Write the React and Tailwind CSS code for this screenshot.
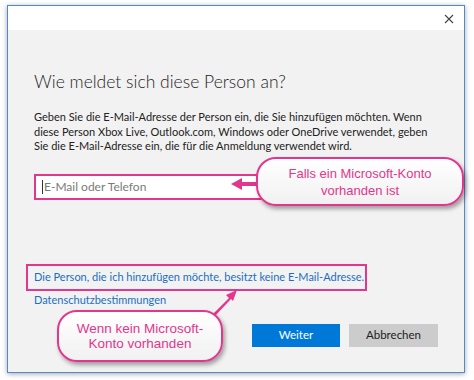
import React from 'react';

function Callout({ className, children }) {
  return (
    <div
      className={`absolute flex items-center justify-center text-center rounded-[20px] border-2 border-[#e2378c] bg-gradient-to-b from-white to-[#f1f1f1] shadow-[2px_3px_4px_rgba(0,0,0,0.35)] text-[#e2378c] ${className}`}
      style={{ fontFamily: '"Liberation Sans", Arial, sans-serif' }}
    >
      {children}
    </div>
  );
}

export default function App() {
  return (
    <div className="w-[474px] h-[380px] bg-white pt-[5px] pl-[7px] overflow-hidden relative" style={{ fontFamily: 'Lato, "Open Sans", sans-serif' }}>
      <div className="w-[458px] h-[368px] border border-[#4f8bcb] shadow-[0_1px_5px_rgba(0,0,0,0.35)] flex flex-col">
        {/* title bar */}
        <div className="h-[24px] bg-white flex items-center justify-end pr-[10px]">
          <svg width="10" height="10" viewBox="0 0 10 10" className="mt-[1px]">
            <path d="M1 1 L9 9 M9 1 L1 9" stroke="#444" strokeWidth="1.1" />
          </svg>
        </div>

        {/* body */}
        <div className="flex-1 bg-[#f2f2f2] pl-[26px] pr-[20px] flex flex-col">
          <h1 className="mt-[40px] text-[17.5px] leading-[24px] font-light text-[#1f1f1f]">
            Wie meldet sich diese Person an?
          </h1>

          <p className="mt-[16px] text-[11px] leading-[14.5px] text-[#222] whitespace-nowrap">
            Geben Sie die E-Mail-Adresse der Person ein, die Sie hinzufügen möchten. Wenn
            <br />
            diese Person Xbox Live, Outlook.com, Windows oder OneDrive verwendet, geben
            <br />
            Sie die E-Mail-Adresse ein, die für die Anmeldung verwendet wird.
          </p>

          <div className="mt-[20px] w-[386px] h-[26px] border-2 border-[#e2378c] bg-white flex items-center pl-[6px]">
            <span className="w-px h-[14px] bg-[#333]" />
            <span className="text-[12px] text-[#7a7a7a] ml-[1px]">E-Mail oder Telefon</span>
          </div>

          <div className="mt-[64px] w-[341px] h-[27px] -ml-[8px] border-2 border-[#e2378c] flex items-center pl-[6px]">
            <span className="text-[11px] text-[#1a6fbf] whitespace-nowrap">
              Die Person, die ich hinzufügen möchte, besitzt keine E-Mail-Adresse.
            </span>
          </div>
          <div className="mt-[1px] text-[11px] text-[#1a6fbf] leading-[16px]">Datenschutzbestimmungen</div>

          <div className="mt-[16px] flex justify-end gap-[9px] mr-[6px]">
            <button className="w-[88px] h-[23px] bg-[#0078d7] text-white text-[11.5px]">Weiter</button>
            <button className="w-[89px] h-[23px] bg-[#cccccc] text-[#222] text-[11.5px]">Abbrechen</button>
          </div>
        </div>
      </div>

      {/* arrow to input */}
      <svg className="absolute left-[228px] top-[176px]" width="32" height="16" viewBox="0 0 32 16">
        <path d="M30 6 L14 6 L14 2 L3 8 L14 14 L14 10 L30 10 Z" fill="#e2378c" />
      </svg>
      <Callout className="left-[256px] top-[157px] w-[208px] h-[49px] text-[13px] leading-[17px]">
        Falls ein Microsoft-Konto
        <br />
        vorhanden ist
      </Callout>

      {/* arrow to link */}
      <svg className="absolute left-[206px] top-[287px]" width="36" height="30" viewBox="0 0 36 30">
        <path d="M6 28 L23 11 L20 8 L31 3 L27 14 L25 12 L9 29 Z" fill="#e2378c" />
      </svg>
      <Callout className="left-[57px] top-[310px] w-[166px] h-[52px] text-[13.5px] leading-[15px]">
        Wenn kein Microsoft-
        <br />
        Konto vorhanden
      </Callout>
    </div>
  );
}
